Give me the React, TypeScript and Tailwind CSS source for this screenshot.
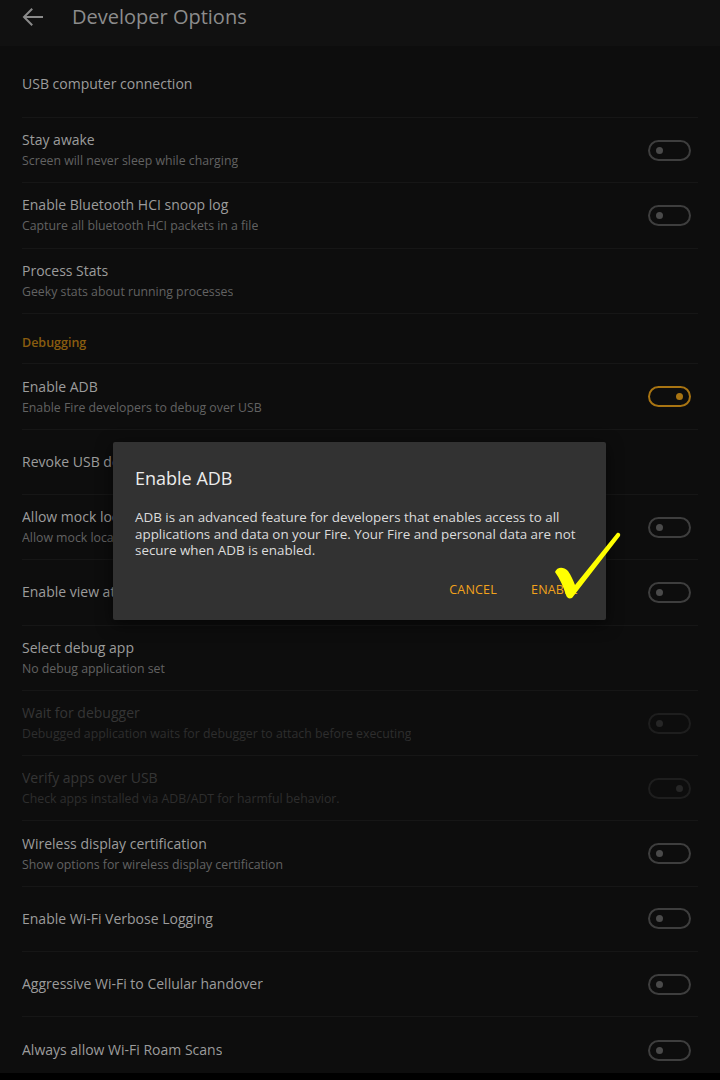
import React from "react";

type Row = {
  title: string;
  sub?: string;
  toggle?: "off" | "on" | "disabledOff" | "disabledOn";
  disabled?: boolean;
};

const rows1: Row[] = [
  { title: "Stay awake", sub: "Screen will never sleep while charging", toggle: "off" },
  { title: "Enable Bluetooth HCI snoop log", sub: "Capture all bluetooth HCI packets in a file", toggle: "off" },
  { title: "Process Stats", sub: "Geeky stats about running processes" },
];

const rows2: Row[] = [
  { title: "Enable ADB", sub: "Enable Fire developers to debug over USB", toggle: "on" },
  { title: "Revoke USB debugging authorizations" },
  { title: "Allow mock locations", sub: "Allow mock locations", toggle: "off" },
  { title: "Enable view attribute inspection", toggle: "off" },
  { title: "Select debug app", sub: "No debug application set" },
  {
    title: "Wait for debugger",
    sub: "Debugged application waits for debugger to attach before executing",
    toggle: "disabledOff",
    disabled: true,
  },
  {
    title: "Verify apps over USB",
    sub: "Check apps installed via ADB/ADT for harmful behavior.",
    toggle: "disabledOn",
    disabled: true,
  },
  { title: "Wireless display certification", sub: "Show options for wireless display certification", toggle: "off" },
  { title: "Enable Wi-Fi Verbose Logging", toggle: "off" },
  { title: "Aggressive Wi-Fi to Cellular handover", toggle: "off" },
  { title: "Always allow Wi-Fi Roam Scans", toggle: "off" },
];

function Toggle({ kind }: { kind: NonNullable<Row["toggle"]> }) {
  if (kind === "on") {
    return (
      <div className="w-[43px] h-[21px] rounded-full border-2 border-[#a87412] flex items-center justify-end pr-[6px]">
        <div className="w-[7px] h-[7px] rounded-full bg-[#a87412]" />
      </div>
    );
  }
  if (kind === "disabledOn") {
    return (
      <div className="w-[43px] h-[21px] rounded-full border-2 border-[#1e1e1e] flex items-center justify-end pr-[6px]">
        <div className="w-[7px] h-[7px] rounded-full bg-[#262626]" />
      </div>
    );
  }
  if (kind === "disabledOff") {
    return (
      <div className="w-[43px] h-[21px] rounded-full border-2 border-[#1e1e1e] flex items-center pl-[6px]">
        <div className="w-[7px] h-[7px] rounded-full bg-[#262626]" />
      </div>
    );
  }
  return (
    <div className="w-[43px] h-[21px] rounded-full border-2 border-[#3e3e3e] flex items-center pl-[6px]">
      <div className="w-[7px] h-[7px] rounded-full bg-[#4a4a4a]" />
    </div>
  );
}

function SettingRow({ row, last }: { row: Row; last?: boolean }) {
  return (
    <div
      className={
        "h-[65.3px] flex items-center justify-between pr-[7px] " +
        (last ? "" : "border-b border-[#161616]")
      }
    >
      <div className="flex flex-col whitespace-nowrap overflow-hidden">
        <div
          className={
            "text-[14px] leading-[20px] " + (row.disabled ? "text-[#353535]" : "text-[#9c9c9c]")
          }
        >
          {row.title}
        </div>
        {row.sub && (
          <div
            className={
              "text-[12.3px] leading-[18px] mt-[2px] " + (row.disabled ? "text-[#2e2e2e]" : "text-[#626262]")
            }
          >
            {row.sub}
          </div>
        )}
      </div>
      {row.toggle && (
        <div className="shrink-0">
          <Toggle kind={row.toggle} />
        </div>
      )}
    </div>
  );
}

export default function App() {
  return (
    <div
      className="relative w-[720px] h-[1080px] overflow-hidden bg-[#0d0d0d]"
      style={{ fontFamily: '"Open Sans", "Noto Sans", sans-serif' }}
    >
      {/* Header */}
      <div className="h-[46px] bg-[#111111] flex items-start">
        <div className="w-[72px] pl-[22px] pt-[8px]">
          <svg width="21" height="18" viewBox="0 0 21 18" fill="none">
            <path d="M20 9H2.5M9.5 1.5L2 9l7.5 7.5" stroke="#8a8a8a" strokeWidth="2" strokeLinecap="square" />
          </svg>
        </div>
        <div className="text-[20px] text-[#8c8c8c] leading-[26px] pt-[4px]">Developer Options</div>
      </div>

      {/* List */}
      <div className="pl-[22px] pr-[22px]">
        <div className="h-[72px] flex items-center border-b border-[#161616] pt-[4px]">
          <div className="text-[14px] text-[#9c9c9c]">USB computer connection</div>
        </div>
        {rows1.map((r, i) => (
          <SettingRow key={i} row={r} />
        ))}
        <div className="h-[50.5px] flex items-center border-b border-[#161616] pt-[10px]">
          <div className="text-[12.5px] font-semibold text-[#8a5d0f]">Debugging</div>
        </div>
        {rows2.map((r, i) => (
          <SettingRow key={i} row={r} last={i === rows2.length - 1} />
        ))}
      </div>

      {/* bottom bar */}
      <div className="absolute left-0 right-0 bottom-0 h-[7px] bg-black" />

      {/* Dialog */}
      <div className="absolute left-[113px] top-[442px] w-[493px] h-[178px] bg-[#323232] rounded-[2px] shadow-[0_4px_16px_rgba(0,0,0,0.6)] flex flex-col pl-[22px] pr-[24px]">
        <div className="text-[18px] text-[#ececec] mt-[23px] leading-[26px]">Enable ADB</div>
        <div className="text-[13.4px] text-[#dcdcdc] leading-[16.5px] mt-[18px]">
          ADB is an advanced feature for developers that enables access to all applications and data on your Fire. Your
          Fire and personal data are not secure when ADB is enabled.
        </div>
        <div className="flex justify-end gap-[34px] mt-[22px] pr-[4px]">
          <div className="text-[12.5px] text-[#f2a31b] tracking-[0.2px]">CANCEL</div>
          <div className="text-[12.5px] text-[#f2a31b] tracking-[0.2px]">ENABLE</div>
        </div>
      </div>

      {/* Yellow check mark overlay */}
      <svg className="absolute left-0 top-0" width="720" height="1080" viewBox="0 0 720 1080">
        <path
          d="M555 572 C557 567 563 566 568 571 C571 575 573 580 575 585 L617 533 C619 532 621 534 620 536 L572 598 C569 599 567 598 566 595 C563 586 560 579 555 572 Z"
          fill="#ffff00"
        />
      </svg>
    </div>
  );
}
